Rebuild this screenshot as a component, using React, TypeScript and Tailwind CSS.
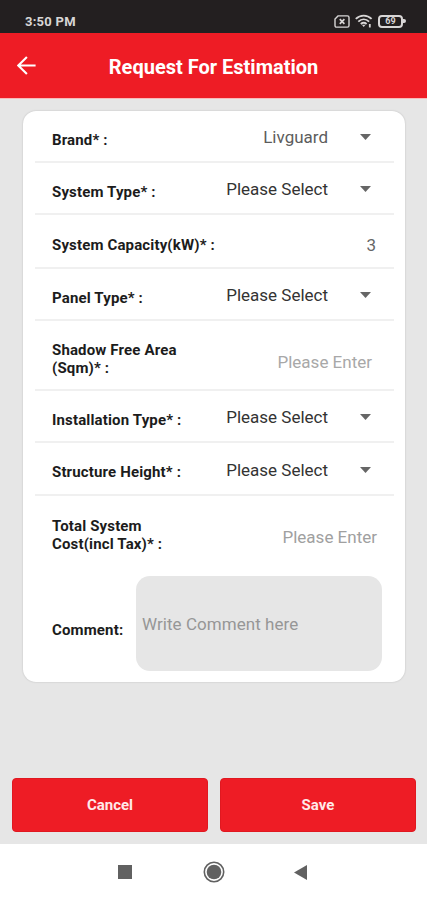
import type { ReactNode } from 'react'

function StatusBar() {
    return (
        <div className="flex h-[33px] items-start justify-between bg-[#231f20] pl-[25px] pr-[21px] pt-[13px] text-[#d8d6d6]">
            <span className="text-[13px] leading-[17px] font-bold tracking-[0.25px]">3:50 PM</span>
            <div className="flex items-center gap-[5px] pt-[1px]">
                <svg width="16" height="13" viewBox="0 0 16 13" fill="none" stroke="currentColor">
                    <path d="M4 .9h9.4c1 0 1.6.6 1.6 1.6v8c0 1-.6 1.6-1.6 1.6H2.6c-1 0-1.6-.6-1.6-1.6V4z" strokeWidth="1.4" />
                    <path d="M5.8 4.2l4.6 4.6m0-4.6L5.8 8.8" strokeWidth="1.7" />
                </svg>
                <svg width="18" height="14" viewBox="0 0 18 14" fill="none" stroke="currentColor" strokeWidth="1.9">
                    <path d="M.8 4.9c4.5-4.4 11.3-4.4 15.8 0M3.3 7.6c3.2-3 7.6-3 10.8 0M5.8 10c1.9-1.6 3.9-1.6 5.8 0" />
                    <path d="M6.9 10.7h3.6l-1.8 2.2z" fill="currentColor" stroke="none" />
                    <path d="M14.8 10v3.5" strokeWidth="1.8" />
                </svg>
                <div className="flex items-center">
                    <div className="flex h-[13px] w-[25px] items-center justify-center rounded-[4px] border-2 border-current text-[9px] leading-none font-bold">
                        69
                    </div>
                    <div className="h-[4px] w-[3px] rounded-r-sm bg-current"></div>
                </div>
            </div>
        </div>
    )
}

function Header() {
    return (
        <header className="flex h-[66px] items-center border-b border-[#f9b9b9] bg-[#ee1c25] px-[17px] text-white">
            <svg className="h-[19px] w-[19px]" viewBox="0 0 19 19" fill="none" stroke="currentColor" strokeWidth="2.1">
                <path d="M18.6 9.5H1.6M9.9 .9L1.3 9.5l8.6 8.6" />
            </svg>
            <h1 className="flex-1 pt-[2px] pr-[19px] text-center text-[20px] leading-6 font-bold">Request For Estimation</h1>
        </header>
    )
}

function Row({ label, height, children, last }: { label: string; height: string; children: ReactNode; last?: boolean }) {
    return (
        <div className={`mr-[11px] ml-[12px] flex items-center justify-between pl-[17px] ${height} ${last ? '' : 'border-b-2 border-[#f0f0f0]'}`}>
            <label className="pt-[7px] text-[15px] leading-[18px] font-bold tracking-[0.15px] whitespace-pre-line text-[#1c1c1c]">{label}</label>
            {children}
        </div>
    )
}

function Select({ value, muted }: { value: string; muted?: boolean }) {
    return (
        <div className="flex items-center gap-[32px] pt-[2px] pr-[23px]">
            <span className={`text-[17px] leading-6 ${muted ? 'text-[#5c5c5c]' : 'text-[#333]'}`}>{value}</span>
            <svg width="11" height="6" viewBox="0 0 11 6" fill="#666">
                <path d="M0 0h11L5.5 6z" />
            </svg>
        </div>
    )
}

export default function App() {
    return (
        <div className="flex h-[900px] w-[427px] flex-col bg-[#e6e6e6] font-[Roboto,sans-serif]">
            <StatusBar />
            <Header />
            <main className="flex-1 pt-[12px]">
                <div className="mr-[22px] ml-[23px] h-[571px] rounded-[13px] bg-white shadow-[0_0_2px_rgba(0,0,0,0.2)]">
                    <Row label="Brand* :" height="h-[52px]">
                        <Select value="Livguard" muted />
                    </Row>
                    <Row label="System Type* :" height="h-[52px]">
                        <Select value="Please Select" />
                    </Row>
                    <Row label="System Capacity(kW)* :" height="h-[54px]">
                        <span className="pt-[7px] pr-[18px] text-[17px] leading-6 text-[#666]">3</span>
                    </Row>
                    <Row label="Panel Type* :" height="h-[52px]">
                        <Select value="Please Select" />
                    </Row>
                    <Row label={'Shadow Free Area\n(Sqm)* :'} height="h-[70px]">
                        <span className="pt-[13px] pr-[22px] text-[17px] leading-6 text-[#a8a8a8]">Please Enter</span>
                    </Row>
                    <Row label="Installation Type* :" height="h-[52px]">
                        <Select value="Please Select" />
                    </Row>
                    <Row label="Structure Height* :" height="h-[53px]">
                        <Select value="Please Select" />
                    </Row>
                    <Row label={'Total System\nCost(incl Tax)* :'} height="h-[70px]" last>
                        <span className="pt-[12px] pr-[17px] text-[17px] leading-6 text-[#a0a0a0]">Please Enter</span>
                    </Row>
                    <div className="mt-[10px] flex items-center pr-[23px] pl-[29px]">
                        <label className="w-[84px] pt-[13px] text-[15px] leading-[18px] font-bold tracking-[0.15px] text-[#1c1c1c]">Comment:</label>
                        <div className="flex h-[95px] flex-1 items-center rounded-[14px] bg-[#e6e6e6] pt-[2px] pl-[6px] text-[17px] tracking-[0.05px] text-[#969696]">
                            Write Comment here
                        </div>
                    </div>
                </div>
            </main>
            <div className="flex gap-[12px] pr-[11px] pb-[12px] pl-[12px] text-[15px] font-bold text-[#ffe9e9]">
                <button type="button" className="h-[54px] flex-1 rounded-[4px] border border-[#e01820] bg-[#ee1c25]">Cancel</button>
                <button type="button" className="h-[54px] flex-1 rounded-[4px] border border-[#e01820] bg-[#ee1c25]">Save</button>
            </div>
            <nav className="flex h-[56px] items-center bg-white pl-[118px] text-[#616161]">
                <div className="h-[14px] w-[14px] bg-current"></div>
                <svg className="ml-[71px]" width="22" height="22" viewBox="0 0 22 22" fill="none">
                    <circle cx="11" cy="11" r="9.7" stroke="currentColor" strokeWidth="1.6" />
                    <circle cx="11" cy="11" r="7.3" fill="currentColor" />
                </svg>
                <svg className="ml-[69px]" width="13" height="15" viewBox="0 0 13 15" fill="currentColor">
                    <path d="M0 7.5L13 0v15z" />
                </svg>
            </nav>
        </div>
    )
}
